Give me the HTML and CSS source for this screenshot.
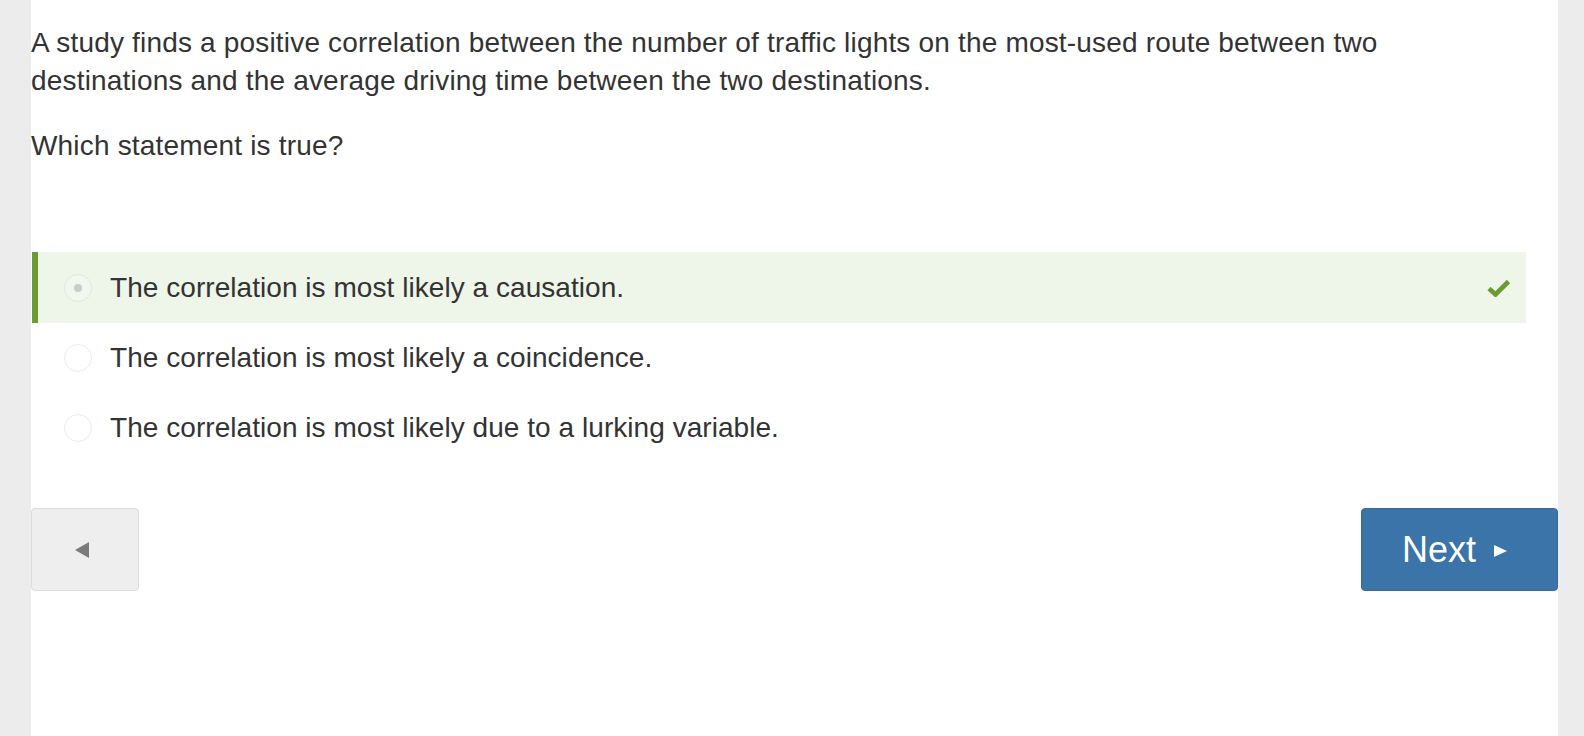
FILE: index.html
```html
<!DOCTYPE html>
<html lang="en">
<head>
<meta charset="utf-8">
<title>Question</title>
<link rel="stylesheet" href="styles.css">
</head>
<body>
<main class="panel">
  <section class="question">
    <p>A study finds a positive correlation between the number of traffic lights on the most-used route between two destinations and the average driving time between the two destinations.</p>
    <p>Which statement is true?</p>
  </section>
  <ul class="options">
    <li class="option correct">
      <span class="radio checked"><span class="dot"></span></span>
      <span class="label">The correlation is most likely a causation.</span>
      <svg class="check" width="24" height="18" viewBox="0 0 24 18"><path d="M2 9.5 L8.5 15.5 L21.5 2.5" fill="none" stroke="#6b9b35" stroke-width="4.6" stroke-linejoin="miter" stroke-linecap="butt"/></svg>
    </li>
    <li class="option">
      <span class="radio"></span>
      <span class="label">The correlation is most likely a coincidence.</span>
    </li>
    <li class="option">
      <span class="radio"></span>
      <span class="label">The correlation is most likely due to a lurking variable.</span>
    </li>
  </ul>
  <nav class="nav">
    <button class="btn btn-back" type="button"><span class="tri-left"></span></button>
    <button class="btn btn-next" type="button">Next<span class="tri-right"></span></button>
  </nav>
</main>
</body>
</html>
```
FILE: styles.css
```css
html, body {
  margin: 0;
  padding: 0;
}
body {
  background: #ececec;
  font-family: "Liberation Sans", Arial, Helvetica, sans-serif;
  color: #333333;
}
.panel {
  margin-left: 31px;
  width: 1527px;
  height: 736px;
  background: #ffffff;
  box-sizing: border-box;
  padding-top: 24px;
}
.question p {
  margin: 0 0 27px 0;
  font-size: 28px;
  line-height: 38px;
  letter-spacing: 0.18px;
  padding-right: 100px;
}
.question p:last-child {
  margin-bottom: 0;
}
.options {
  list-style: none;
  margin: 87px 32px 0 1px;
  padding: 0;
}
.option {
  display: flex;
  align-items: center;
  height: 70px;
  padding-left: 32px;
  font-size: 28px;
  letter-spacing: 0.05px;
  color: #333;
}
.option.correct {
  height: 71px;
  background: #eef5e9;
  border-left: 6px solid #6b9b35;
  padding-left: 26px;
  padding-right: 15px;
}
.radio {
  width: 26px;
  height: 26px;
  border: 1px solid #ececec;
  border-radius: 50%;
  background: #fff;
  display: flex;
  align-items: center;
  justify-content: center;
  flex: none;
}
.radio.checked {
  background: #f1f6ee;
  border-color: #e2e8df;
}
.dot {
  width: 8px;
  height: 8px;
  border-radius: 50%;
  background: #c9cdc7;
}
.label {
  margin-left: 18px;
  flex: 1;
}
.check {
  flex: none;
}
.nav {
  display: flex;
  justify-content: space-between;
  margin-top: 45px;
}
.btn {
  height: 83px;
  border-radius: 4px;
  font-family: inherit;
  cursor: pointer;
  display: flex;
  align-items: center;
  justify-content: center;
  padding: 0;
}
.btn-back {
  width: 108px;
  background: #eeeeee;
  border: 1px solid #dcdcdc;
}
.tri-left {
  width: 0;
  height: 0;
  border-top: 8px solid transparent;
  border-bottom: 8px solid transparent;
  border-right: 14px solid #7b7b7b;
  margin-left: -6px;
}
.btn-next {
  width: 197px;
  background: #3b74a9;
  border: 1px solid #36699a;
  color: #ffffff;
  font-size: 36px;
  padding-right: 10px;
}
.tri-right {
  width: 0;
  height: 0;
  border-top: 6.5px solid transparent;
  border-bottom: 6.5px solid transparent;
  border-left: 13px solid #ffffff;
  margin-left: 18px;
  margin-top: 3px;
}
```
